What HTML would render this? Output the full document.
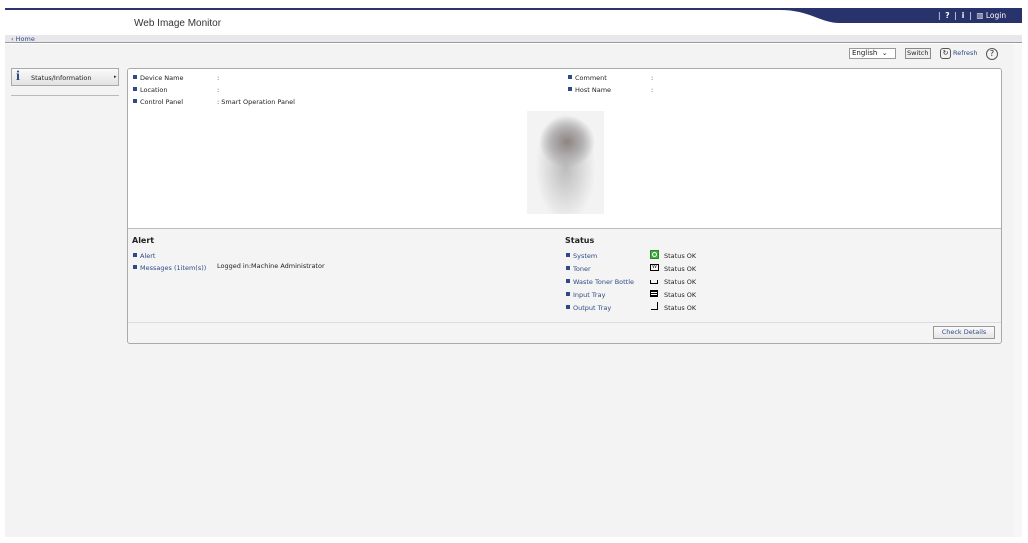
<!DOCTYPE html>
<html><head><style>
*{margin:0;padding:0;box-sizing:border-box}
body{width:1028px;height:543px;background:#fff;font-family:"DejaVu Sans","Liberation Sans",sans-serif;font-size:6.5px;color:#222;position:relative;overflow:hidden}
.a{position:absolute}
.lnk{color:#2f4a86}
.sq{display:inline-block;width:4px;height:4px;background:#2f4a86;margin-right:3px;vertical-align:1px}
</style></head><body>
<div class="a" style="left:5px;top:8px;width:1017px;height:2px;background:#2b3670"></div>
<svg class="a" style="left:780px;top:8px" width="242" height="15"><path d="M0 0 H242 V15 H60 C40 15 30 2 0 2 Z" fill="#28336b"/></svg>
<div class="a" style="left:938px;top:11px;color:#fff;font-size:7.5px;white-space:nowrap">|&nbsp;&nbsp;<b>?</b>&nbsp;&nbsp;|&nbsp;&nbsp;<b>i</b>&nbsp;&nbsp;|&nbsp;&nbsp;▥&nbsp;Login</div>
<div class="a" style="left:134px;top:18px;font-size:10px;color:#333;font-family:'Liberation Sans',sans-serif">Web Image Monitor</div>
<div class="a" style="left:5px;top:35px;width:1017px;height:8px;background:#e8e8ec;border-bottom:1px solid #999"></div>
<div class="a lnk" style="left:11px;top:35px;font-size:6.5px">‹ Home</div>
<div class="a" style="left:5px;top:44px;width:1008px;height:493px;background:#f3f3f3"></div>
<div class="a" style="left:1013px;top:44px;width:9px;height:493px;background:#f7f7f7"></div>
<div class="a" style="left:849px;top:48px;width:47px;height:11px;border:1px solid #999;background:#fff;font-size:7px;padding-left:2px">English &nbsp;⌄</div>
<div class="a" style="left:905px;top:48px;width:26px;height:11px;border:1px solid #888;background:#eee;font-size:6.5px;padding-left:1px;line-height:9px">Switch</div>
<div class="a" style="left:940px;top:48px;width:11px;height:11px;border:1px solid #555;border-radius:3px;font-size:7px;text-align:center;line-height:9px">↻</div>
<div class="a lnk" style="left:953px;top:49px;font-size:6.5px">Refresh</div>
<div class="a" style="left:986px;top:48px;width:12px;height:12px;border:1px solid #555;border-radius:50%;font-size:8px;text-align:center;line-height:10px">?</div>
<div class="a" style="left:11px;top:68px;width:108px;height:18px;border:1px solid #aaa;background:linear-gradient(#fafafa,#e2e2e2)"></div>
<div class="a" style="left:16px;top:69px;font-size:14px;font-weight:bold;color:#2f4a86;font-family:'Liberation Serif',serif">i</div>
<div class="a" style="left:31px;top:74px">Status/Information</div>
<div class="a" style="left:114px;top:74px;font-size:5px">▸</div>
<div class="a" style="left:11px;top:95px;width:108px;height:1px;background:#bbb"></div>
<div class="a" style="left:127px;top:68px;width:875px;height:276px;border:1px solid #aaa;border-radius:3px;background:#f4f4f4;overflow:hidden">
 <div class="a" style="left:0;top:0;width:874px;height:160px;background:#fff;border-bottom:1px solid #bbb"></div>
 <div class="a" style="left:0;top:253px;width:874px;height:1px;background:#ddd"></div>
</div>
<div class="a" style="left:133px;top:72px;line-height:12px"><span class="sq"></span>Device Name<br><span class="sq"></span>Location<br><span class="sq"></span>Control Panel</div>
<div class="a" style="left:217px;top:72px;line-height:12px">:<br>:<br>: Smart Operation Panel</div>
<div class="a" style="left:568px;top:72px;line-height:12px"><span class="sq"></span>Comment<br><span class="sq"></span>Host Name</div>
<div class="a" style="left:651px;top:72px;line-height:12px">:<br>:</div>
<div class="a" style="left:527px;top:111px;width:77px;height:103px;background:radial-gradient(ellipse 28px 26px at 52% 30%,#8e8482,rgba(170,168,168,.85) 55%,transparent 100%),radial-gradient(ellipse 30px 55px at 50% 55%,#bcbcbc,#f3f3f3 100%)"></div>
<div class="a" style="left:132px;top:236px;font-size:8px;font-weight:bold">Alert</div>
<div class="a lnk" style="left:133px;top:250px;line-height:12px"><span class="sq"></span>Alert<br><span class="sq"></span>Messages (1item(s))</div>
<div class="a" style="left:217px;top:262px">Logged in:Machine Administrator</div>
<div class="a" style="left:565px;top:236px;font-size:8px;font-weight:bold">Status</div>
<div class="a lnk" style="left:566px;top:250px;line-height:13px"><span class="sq"></span>System<br><span class="sq"></span>Toner<br><span class="sq"></span>Waste Toner Bottle<br><span class="sq"></span>Input Tray<br><span class="sq"></span>Output Tray</div>
<div class="a" style="left:650px;top:250px;width:9px;height:9px;background:#3fae3f;border:1px solid #2a8a2a"><div style="margin:1px;width:5px;height:5px;border:1px solid #fff;border-radius:50%"></div></div>
<div class="a" style="left:650px;top:264px;width:9px;height:7px;border:1px solid #000;font-size:5px;line-height:5px;text-align:center">W</div>
<div class="a" style="left:650px;top:280px;width:8px;height:4px;border:1px solid #000;border-top:none"></div>
<div class="a" style="left:650px;top:290px;width:8px;height:7px;border:1px solid #000;background:repeating-linear-gradient(#000 0 1px,#fff 1px 2px)"></div>
<div class="a" style="left:651px;top:302px;width:7px;height:8px;border-right:1px solid #000;border-bottom:1px solid #000"></div>
<div class="a" style="left:664px;top:250px;line-height:13px">Status OK<br>Status OK<br>Status OK<br>Status OK<br>Status OK</div>
<div class="a lnk" style="left:933px;top:326px;width:62px;height:13px;border:1px solid #999;background:linear-gradient(#fafafa,#e6e6e6);text-align:center;line-height:11px">Check Details</div>
</body></html>
